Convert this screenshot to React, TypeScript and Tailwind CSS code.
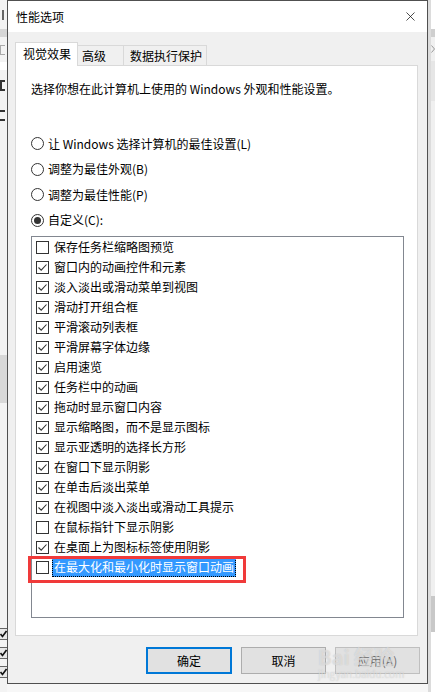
import { X } from "lucide-react";

const font = { fontFamily: '"Noto Sans CJK SC", "Noto Sans", sans-serif' };

const items: [string, boolean][] = [
  ["保存任务栏缩略图预览", false],
  ["窗口内的动画控件和元素", true],
  ["淡入淡出或滑动菜单到视图", true],
  ["滑动打开组合框", true],
  ["平滑滚动列表框", true],
  ["平滑屏幕字体边缘", true],
  ["启用速览", true],
  ["任务栏中的动画", true],
  ["拖动时显示窗口内容", true],
  ["显示缩略图，而不是显示图标", true],
  ["显示亚透明的选择长方形", true],
  ["在窗口下显示阴影", true],
  ["在单击后淡出菜单", true],
  ["在视图中淡入淡出或滑动工具提示", true],
  ["在鼠标指针下显示阴影", false],
  ["在桌面上为图标标签使用阴影", true],
  ["在最大化和最小化时显示窗口动画", false],
];

const radios = [
  ["让 Windows 选择计算机的最佳设置(L)", false],
  ["调整为最佳外观(B)", false],
  ["调整为最佳性能(P)", false],
  ["自定义(C):", true],
] as const;

function Check({ on }: { on: boolean }) {
  return (
    <span className="w-[13px] h-[13px] border border-[#333] bg-white flex items-center justify-center shrink-0">
      {on && (
        <svg width="11" height="11" viewBox="0 0 11 11">
          <path d="M1.5 5.5 L4.2 8.2 L9.5 2.5" fill="none" stroke="#333" strokeWidth="1.1" />
        </svg>
      )}
    </span>
  );
}

function Radio({ on }: { on: boolean }) {
  return (
    <span className="w-[13px] h-[13px] rounded-full border border-[#333] bg-white flex items-center justify-center shrink-0">
      {on && <span className="w-[7px] h-[7px] rounded-full bg-[#333]" />}
    </span>
  );
}

function TinyCheck() {
  return (
    <span className="w-[7px] h-[12px] bg-[#e8e8e8] border-y border-[#666] flex items-center">
      <svg width="7" height="8" viewBox="0 0 7 8">
        <path d="M0.5 4 L2.5 6.5 L6.5 1" fill="none" stroke="#111" strokeWidth="1.6" />
      </svg>
    </span>
  );
}

export default function App() {
  return (
    <div className="w-[435px] h-[692px] bg-[#f7f7f7] flex overflow-hidden relative text-[12px] text-black" style={font}>
      {/* window behind, left edge */}
      <div className="w-[7px] h-full flex flex-col shrink-0 bg-[#f3f3f3] overflow-hidden">
        <div className="h-[29px] flex items-center">
          <span className="w-[2px] h-[10px] bg-[#666] ml-[2px]" />
        </div>
        <div className="h-[8px] bg-[#d6d6d6]" />
        <div className="h-[25px] flex items-center">
          <span className="w-[5px] h-[10px] border-y border-l border-[#aaa]" />
        </div>
        <div className="h-[8px] bg-white" />
        <div className="h-[30px] flex items-center">
          <span className="w-[5px] h-[11px] border-y-2 border-l-2 border-[#333]" />
        </div>
        <div className="h-[30px] flex items-center">
          <span className="w-[5px] h-[11px] border-y-2 border-[#333]" />
        </div>
        <div className="flex-1" />
        <div className="h-[48px] bg-[#d8d8d8]" />
        <div className="flex-1" />
        <div className="flex flex-col gap-[7px] pb-[14px]">
          <TinyCheck />
          <TinyCheck />
          <TinyCheck />
        </div>
      </div>

      {/* dialog */}
      <div className="w-[421px] h-[684px] border border-[#505050] bg-[#f0f0f0] flex flex-col shrink-0">
        <div className="h-[31px] bg-white flex items-center justify-between pl-[8px] pr-[9px]">
          <span className="leading-none">性能选项</span>
          <X size={15} strokeWidth={1.2} color="#111" />
        </div>

        <div className="pl-[7px] pt-[10px] flex flex-col">
          <div className="flex items-end h-[24px] relative z-10">
            <div className="w-[63px] h-[24px] bg-white border border-[#d9d9d9] border-b-0 pl-[7px] leading-[22px]">视觉效果</div>
            <div className="w-[46px] h-[21px] bg-[#f0f0f0] border border-[#d9d9d9] border-l-0 pl-[4px] leading-[20px]">高级</div>
            <div className="w-[83px] h-[21px] bg-[#f0f0f0] border border-[#d9d9d9] border-l-0 pl-[6px] leading-[20px]">数据执行保护</div>
          </div>

          <div className="w-[403px] h-[571px] -mt-[1px] bg-white border border-[#d9d9d9] pl-[15px] flex flex-col">
            <div className="pt-[15px] leading-[16px]">选择你想在此计算机上使用的 Windows 外观和性能设置。</div>
            <div className="mt-[34px] flex flex-col">
              {radios.map(([label, on]) => (
                <div key={label} className="h-[25.5px] flex items-center gap-[4px]">
                  <Radio on={on} />
                  <span className="leading-none">{label}</span>
                </div>
              ))}
            </div>

            <div className="relative mt-[3px] w-[373px] h-[382px] border border-[#828790] bg-white flex flex-col">
              {items.map(([label, on], i) => {
                const last = i === items.length - 1;
                return (
                  <div key={label} className="h-[20px] flex items-center pl-[4px] gap-[3px]">
                    <Check on={on} />
                    <span
                      className={
                        last
                          ? "bg-[#3399ff] text-white h-[20px] leading-[20px] pl-[2px] pr-[2px] outline outline-1 outline-dotted outline-black -outline-offset-1"
                          : "leading-none pl-[2px]"
                      }
                    >
                      {label}
                    </span>
                  </div>
                );
              })}
              <div className="absolute left-[-4px] top-[319px] w-[218px] h-[27px] border-[3px] border-[#f03a3a]" />
            </div>
          </div>

          <div className="flex justify-end gap-[9px] pr-[7px] mt-[11px]">
            <button className="w-[86px] h-[27px] bg-[#e1e1e1] border-2 border-[#0078d7]">确定</button>
            <button className="w-[85px] h-[27px] bg-[#e1e1e1] border border-[#adadad]">取消</button>
            <button className="w-[85px] h-[27px] bg-[#e1e1e1] border border-[#bfbfbf] text-[#6a6a6a]">应用(A)</button>
          </div>
        </div>
      </div>

      {/* window behind, right edge */}
      <div className="w-[7px] h-full flex flex-col shrink-0 bg-[#f0f0f0] border-l-[3px] border-[#dcdcdc]">
        <div className="h-[29px] bg-white" />
        <div className="h-[8px] bg-[#cfcfcf]" />
        <div className="h-[24px] flex items-center">
          <svg width="4" height="8" viewBox="0 0 4 8">
            <path d="M0.5 0.5 L3.5 4 L0.5 7.5" fill="none" stroke="#999" strokeWidth="1" />
          </svg>
        </div>
        <div className="h-[40px] bg-[#e6e6e6]" />
        <div className="flex-1" />
        <div className="h-[36px] bg-[#c8c8c8]" />
        <div className="h-[60px] bg-white" />
      </div>

      {/* watermark */}
      <div className="absolute left-[318px] top-[645px] flex flex-col items-start pointer-events-none text-white/45" style={{ textShadow: "0 0 1px rgba(150,150,150,0.5)" }}>
        <span className="text-[20px] font-bold leading-[24px]">Bai 经验</span>
        <span className="text-[10px] leading-[12px] -mt-[1px]">jingyan.baidu.com</span>
      </div>
    </div>
  );
}
